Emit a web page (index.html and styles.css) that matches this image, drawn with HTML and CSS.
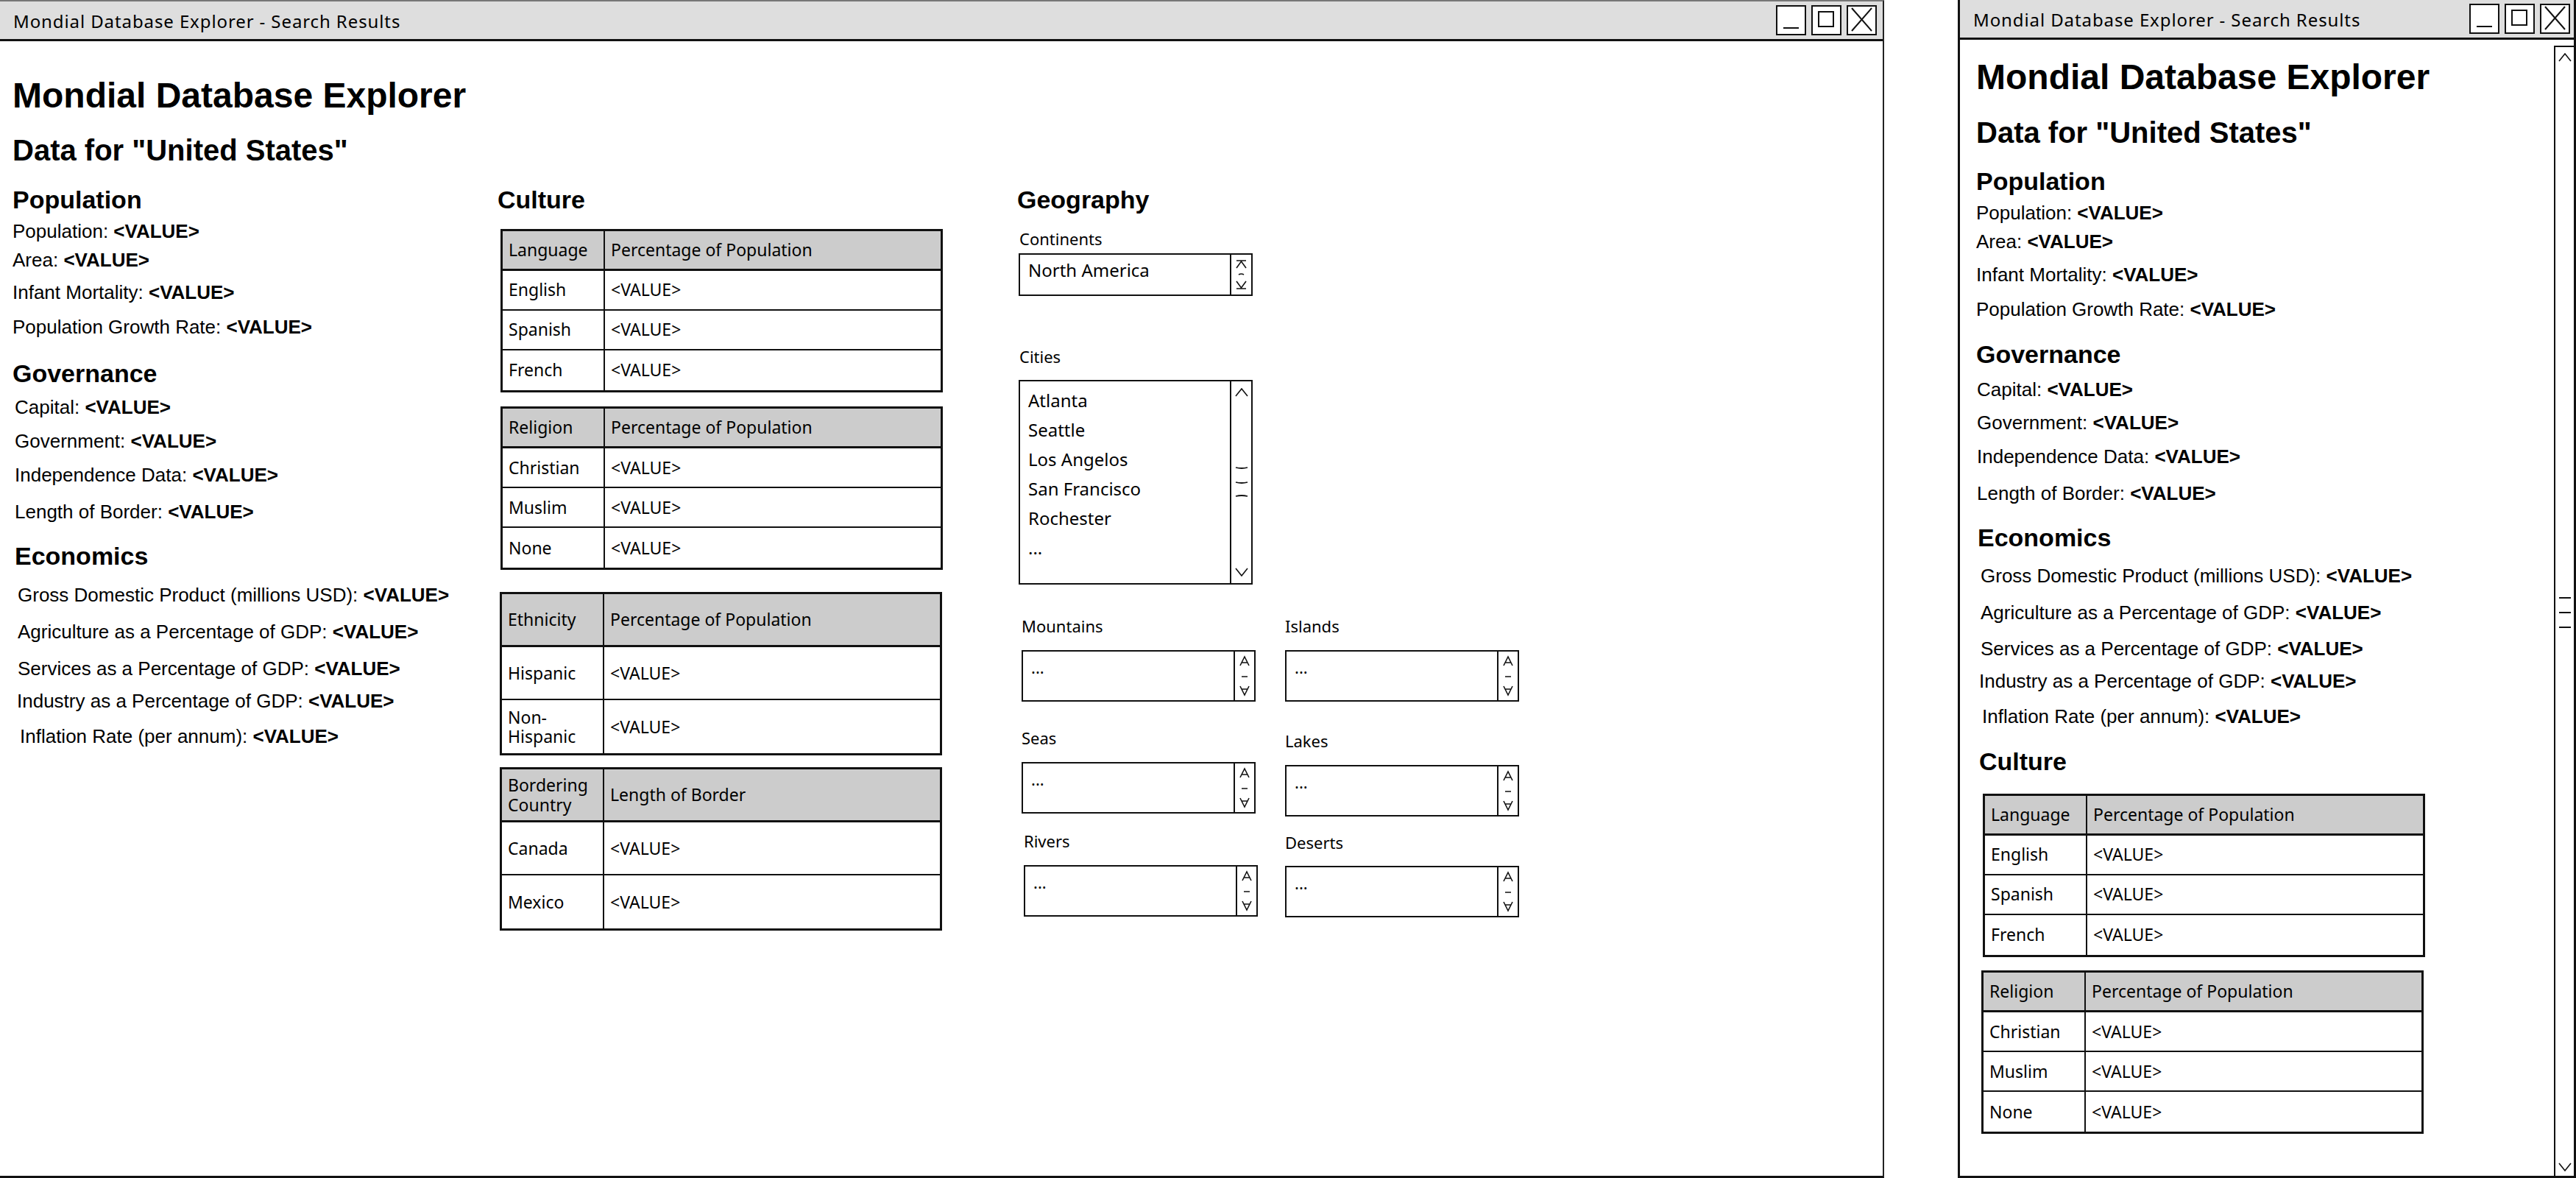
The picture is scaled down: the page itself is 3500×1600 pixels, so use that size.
FILE: index.html
```html
<!DOCTYPE html>
<html lang="en">
<head>
<meta charset="utf-8">
<title>Mondial Database Explorer - Search Results</title>
<link rel="stylesheet" href="styles.css">
</head>
<body>
<div class="desk">

  <section class="win win-main">
    <header class="titlebar">
      <span class="title">Mondial Database Explorer - Search Results</span>
      <div class="wbtns">
        <span class="wbtn"><svg viewBox="0 0 37 37"><line x1="8" y1="29" x2="29" y2="29"/></svg></span>
        <span class="wbtn"><svg viewBox="0 0 37 37"><rect x="8" y="7" width="20" height="20"/></svg></span>
        <span class="wbtn"><svg viewBox="0 0 37 37"><line x1="5" y1="2" x2="32" y2="33"/><line x1="32" y1="2" x2="5" y2="33"/></svg></span>
      </div>
    </header>

    <div class="page">
      <h1>Mondial Database Explorer</h1>
      <h2>Data for "United States"</h2>

      <div class="cols">
        <div class="col">
          <h3>Population</h3>
          <p class="fact g13">Population: <b>&lt;VALUE&gt;</b></p>
          <p class="fact g13">Area: <b>&lt;VALUE&gt;</b></p>
          <p class="fact g18">Infant Mortality: <b>&lt;VALUE&gt;</b></p>
          <p class="fact g21">Population Growth Rate: <b>&lt;VALUE&gt;</b></p>

          <h3 class="g33">Governance</h3>
          <p class="fact g16 in3">Capital: <b>&lt;VALUE&gt;</b></p>
          <p class="fact g20 in3">Government: <b>&lt;VALUE&gt;</b></p>
          <p class="fact g20 in3">Independence Data: <b>&lt;VALUE&gt;</b></p>
          <p class="fact g24 in3">Length of Border: <b>&lt;VALUE&gt;</b></p>

          <h3 class="g30 in3">Economics</h3>
          <p class="fact g23 in7">Gross Domestic Product (millions USD): <b>&lt;VALUE&gt;</b></p>
          <p class="fact g24 in7">Agriculture as a Percentage of GDP: <b>&lt;VALUE&gt;</b></p>
          <p class="fact g24 in7">Services as a Percentage of GDP: <b>&lt;VALUE&gt;</b></p>
          <p class="fact g18h in6">Industry as a Percentage of GDP: <b>&lt;VALUE&gt;</b></p>
          <p class="fact g22 in10">Inflation Rate (per annum): <b>&lt;VALUE&gt;</b></p>
        </div>

        <div class="col">
          <h3>Culture</h3>
          <div class="tbl g23 shift4">
            <span class="hd">Language</span><span class="hd">Percentage of Population</span>
            <span>English</span><span>&lt;VALUE&gt;</span>
            <span>Spanish</span><span>&lt;VALUE&gt;</span>
            <span>French</span><span>&lt;VALUE&gt;</span>
          </div>
          <div class="tbl g19h shift4">
            <span class="hd">Religion</span><span class="hd">Percentage of Population</span>
            <span>Christian</span><span>&lt;VALUE&gt;</span>
            <span>Muslim</span><span>&lt;VALUE&gt;</span>
            <span>None</span><span>&lt;VALUE&gt;</span>
          </div>
          <div class="tbl tall g30 shift3">
            <span class="hd">Ethnicity</span><span class="hd">Percentage of Population</span>
            <span>Hispanic</span><span>&lt;VALUE&gt;</span>
            <span class="two">Non-<br>Hispanic</span><span>&lt;VALUE&gt;</span>
          </div>
          <div class="tbl tall g16 shift3">
            <span class="hd two">Bordering<br>Country</span><span class="hd">Length of Border</span>
            <span>Canada</span><span>&lt;VALUE&gt;</span>
            <span>Mexico</span><span>&lt;VALUE&gt;</span>
          </div>
        </div>

        <div class="col">
          <h3>Geography</h3>
          <div class="geo-label g25 shift3">Continents</div>
          <div class="lbox combo shift2">
            <div class="lbox-text">North America</div>
            <div class="lbox-bar">
              <svg class="bar-ico" viewBox="0 0 27 54"><path d="M7 8 H20 M7 18 L13.5 9 L20 18 M10 27 Q13.5 25 17 27 M7 36 L13.5 45 L20 36 M7 46 H20"/></svg>
            </div>
          </div>

          <div class="geo-label g71 shift3">Cities</div>
          <div class="lbox cities shift2">
            <ul class="lbox-list">
              <li>Atlanta</li>
              <li>Seattle</li>
              <li>Los Angelos</li>
              <li>San Francisco</li>
              <li>Rochester</li>
              <li>...</li>
            </ul>
            <div class="lbox-bar bar-split">
              <svg class="chev" viewBox="0 0 18 12"><polyline points="1,11 9,1 17,11"/></svg>
              <svg class="grip" viewBox="0 0 18 44"><path d="M1 2 Q9 4 17 2 M1 22 Q9 24 17 22 M1 41 Q9 39 17 41"/></svg>
              <svg class="chev" viewBox="0 0 18 12"><polyline points="1,1 9,11 17,1"/></svg>
            </div>
          </div>

          <div class="spins">
            <div class="spin-col">
              <div class="spin">
                <div class="geo-label">Mountains</div>
                <div class="lbox small">
                  <div class="lbox-text dots">...</div>
                  <div class="lbox-bar"><svg class="bar-ico" viewBox="0 0 26 66"><path d="M7 19 L13 7 L19 19 M9 15 H17 M9 34 H17 M7 47 L13 59 L19 47 M9 51 H17"/></svg></div>
                </div>
              </div>
              <div class="spin g38">
                <div class="geo-label">Seas</div>
                <div class="lbox small">
                  <div class="lbox-text dots">...</div>
                  <div class="lbox-bar"><svg class="bar-ico" viewBox="0 0 26 66"><path d="M7 19 L13 7 L19 19 M9 15 H17 M9 34 H17 M7 47 L13 59 L19 47 M9 51 H17"/></svg></div>
                </div>
              </div>
              <div class="spin g26 shift3">
                <div class="geo-label">Rivers</div>
                <div class="lbox small">
                  <div class="lbox-text dots">...</div>
                  <div class="lbox-bar"><svg class="bar-ico" viewBox="0 0 26 66"><path d="M7 19 L13 7 L19 19 M9 15 H17 M9 34 H17 M7 47 L13 59 L19 47 M9 51 H17"/></svg></div>
                </div>
              </div>
            </div>
            <div class="spin-col">
              <div class="spin">
                <div class="geo-label">Islands</div>
                <div class="lbox small">
                  <div class="lbox-text dots">...</div>
                  <div class="lbox-bar"><svg class="bar-ico" viewBox="0 0 26 66"><path d="M7 19 L13 7 L19 19 M9 15 H17 M9 34 H17 M7 47 L13 59 L19 47 M9 51 H17"/></svg></div>
                </div>
              </div>
              <div class="spin g42">
                <div class="geo-label">Lakes</div>
                <div class="lbox small">
                  <div class="lbox-text dots">...</div>
                  <div class="lbox-bar"><svg class="bar-ico" viewBox="0 0 26 66"><path d="M7 19 L13 7 L19 19 M9 15 H17 M9 34 H17 M7 47 L13 59 L19 47 M9 51 H17"/></svg></div>
                </div>
              </div>
              <div class="spin g24">
                <div class="geo-label">Deserts</div>
                <div class="lbox small">
                  <div class="lbox-text dots">...</div>
                  <div class="lbox-bar"><svg class="bar-ico" viewBox="0 0 26 66"><path d="M7 19 L13 7 L19 19 M9 15 H17 M9 34 H17 M7 47 L13 59 L19 47 M9 51 H17"/></svg></div>
                </div>
              </div>
            </div>
          </div>
        </div>
      </div>
    </div>
  </section>

  <section class="win win-side">
    <header class="titlebar">
      <span class="title">Mondial Database Explorer - Search Results</span>
      <div class="wbtns">
        <span class="wbtn"><svg viewBox="0 0 37 37"><line x1="8" y1="29" x2="29" y2="29"/></svg></span>
        <span class="wbtn"><svg viewBox="0 0 37 37"><rect x="8" y="7" width="20" height="20"/></svg></span>
        <span class="wbtn"><svg viewBox="0 0 37 37"><line x1="5" y1="2" x2="32" y2="33"/><line x1="32" y1="2" x2="5" y2="33"/></svg></span>
      </div>
    </header>

    <div class="side-body">
      <div class="page2">
        <h1>Mondial Database Explorer</h1>
        <h2>Data for "United States"</h2>

        <h3 class="g29">Population</h3>
        <p class="fact g13">Population: <b>&lt;VALUE&gt;</b></p>
        <p class="fact g13">Area: <b>&lt;VALUE&gt;</b></p>
        <p class="fact g19">Infant Mortality: <b>&lt;VALUE&gt;</b></p>
        <p class="fact g21">Population Growth Rate: <b>&lt;VALUE&gt;</b></p>

        <h3 class="g31">Governance</h3>
        <p class="fact g18 in1">Capital: <b>&lt;VALUE&gt;</b></p>
        <p class="fact g19 in1">Government: <b>&lt;VALUE&gt;</b></p>
        <p class="fact g20 in1">Independence Data: <b>&lt;VALUE&gt;</b></p>
        <p class="fact g24 in1">Length of Border: <b>&lt;VALUE&gt;</b></p>

        <h3 class="g30 in2">Economics</h3>
        <p class="fact g22 in6">Gross Domestic Product (millions USD): <b>&lt;VALUE&gt;</b></p>
        <p class="fact g23h in6">Agriculture as a Percentage of GDP: <b>&lt;VALUE&gt;</b></p>
        <p class="fact g23 in6">Services as a Percentage of GDP: <b>&lt;VALUE&gt;</b></p>
        <p class="fact g18 in4">Industry as a Percentage of GDP: <b>&lt;VALUE&gt;</b></p>
        <p class="fact g22 in8">Inflation Rate (per annum): <b>&lt;VALUE&gt;</b></p>

        <h3 class="g31 in4">Culture</h3>
        <div class="tbl g27 shift9">
          <span class="hd">Language</span><span class="hd">Percentage of Population</span>
          <span>English</span><span>&lt;VALUE&gt;</span>
          <span>Spanish</span><span>&lt;VALUE&gt;</span>
          <span>French</span><span>&lt;VALUE&gt;</span>
        </div>
        <div class="tbl g18h shift7">
          <span class="hd">Religion</span><span class="hd">Percentage of Population</span>
          <span>Christian</span><span>&lt;VALUE&gt;</span>
          <span>Muslim</span><span>&lt;VALUE&gt;</span>
          <span>None</span><span>&lt;VALUE&gt;</span>
        </div>
      </div>

      <div class="vscroll">
        <svg class="chev" viewBox="0 0 18 12"><polyline points="1,11 9,1 17,11"/></svg>
        <svg class="grip" viewBox="0 0 18 44"><path d="M1 2 H17 M1 22 H17 M1 42 H17"/></svg>
        <svg class="chev" viewBox="0 0 18 12"><polyline points="1,1 9,11 17,1"/></svg>
      </div>
    </div>
  </section>

</div>
</body>
</html>
```

FILE: styles.css
```css
* {
  box-sizing: border-box;
}

html,
body {
  margin: 0;
  padding: 0;
}

body {
  width: 3500px;
  height: 1600px;
  overflow: hidden;
  background: #ffffff;
  color: #000000;
  font-family: "Liberation Sans", Arial, sans-serif;
}

.desk {
  display: flex;
  align-items: flex-start;
  height: 1600px;
}

/* ---------- windows ---------- */
.win {
  height: 1600px;
  background: #ffffff;
  border-bottom: 3px solid #111111;
  display: flex;
  flex-direction: column;
  overflow: hidden;
  flex: none;
}

.win-main {
  width: 2560px;
  border-top: 2px solid #777777;
  border-right: 2px solid #222222;
}

.win-side {
  width: 840px;
  margin-left: 100px;
  border-left: 3px solid #111111;
  border-right: 3px solid #111111;
}

.titlebar {
  flex: none;
  height: 54px;
  display: flex;
  justify-content: space-between;
  align-items: flex-start;
  background: #dedede;
  border-bottom: 3px solid #111111;
}

.win-main .titlebar {
  padding: 0 8px 0 18px;
}

.win-side .titlebar {
  padding: 0 5px 0 18px;
}

.title {
  margin-top: 15px;
  font-family: "Noto Sans", sans-serif;
  font-size: 24px;
  line-height: 1;
  letter-spacing: 0.9px;
  white-space: nowrap;
}

.wbtns {
  display: flex;
  gap: 7px;
  margin-top: 5px;
}

.wbtn {
  width: 41px;
  height: 41px;
  border: 2px solid #111111;
  background: #ffffff;
  display: flex;
}

.wbtn svg {
  width: 100%;
  height: 100%;
  fill: none;
  stroke: #111111;
  stroke-width: 2;
}

/* ---------- page content ---------- */
.page {
  flex: 1;
  padding: 50px 0 0 17px;
}

h1 {
  margin: 0;
  font-size: 48px;
  line-height: 1;
  font-weight: bold;
  white-space: nowrap;
}

h2 {
  margin: 30px 0 0;
  font-size: 40px;
  line-height: 1;
  font-weight: bold;
  white-space: nowrap;
}

.page2 h2 {
  margin-top: 31.7px;
}

h3 {
  margin: 0;
  font-size: 34px;
  line-height: 1;
  font-weight: bold;
}

.fact {
  margin: 0;
  font-size: 26px;
  line-height: 1;
  white-space: nowrap;
}

.fact b {
  font-weight: bold;
}

.cols {
  display: grid;
  grid-template-columns: 659px 706px 760px;
  margin-top: 29.5px;
}

.col {
  display: flex;
  flex-direction: column;
  align-items: flex-start;
}

/* vertical spacing helpers */
.g13 { margin-top: 13px; }
.g16 { margin-top: 16px; }
.g18 { margin-top: 18px; }
.g18h { margin-top: 18.5px; }
.g19 { margin-top: 19px; }
.g19h { margin-top: 19.5px; }
.g20 { margin-top: 20px; }
.g21 { margin-top: 21px; }
.g22 { margin-top: 22px; }
.g23 { margin-top: 23px; }
.g23h { margin-top: 23.5px; }
.g24 { margin-top: 24px; }
.g25 { margin-top: 25px; }
.g26 { margin-top: 26.5px; }
.g27 { margin-top: 27px; }
.g29 { margin-top: 29px; }
.g30 { margin-top: 30px; }
.g31 { margin-top: 31px; }
.g33 { margin-top: 33px; }
.g38 { margin-top: 38.5px; }
.g42 { margin-top: 42.5px; }
.g71 { margin-top: 71px; }

/* horizontal nudges */
.in1 { margin-left: 1px; }
.in2 { margin-left: 2px; }
.in3 { margin-left: 3px; }
.in4 { margin-left: 4px; }
.in6 { margin-left: 6px; }
.in7 { margin-left: 7px; }
.in8 { margin-left: 8px; }
.in10 { margin-left: 10px; }

.shift2 { margin-left: 2px; }
.shift3 { margin-left: 3px; }
.shift4 { margin-left: 4px; }
.shift7 { margin-left: 7px; }
.shift9 { margin-left: 9px; }

/* ---------- sketch tables ---------- */
.tbl {
  display: grid;
  grid-template-columns: 139px 1fr;
  width: 601px;
  border: 3px solid #111111;
  font-family: "Noto Sans", sans-serif;
  font-size: 23px;
  line-height: 1;
}

.tbl > span {
  display: flex;
  align-items: center;
  height: 54px;
  padding: 0 8px;
  border-bottom: 2px solid #111111;
  white-space: nowrap;
}

.tbl > span:nth-child(odd) {
  border-right: 2px solid #111111;
}

.tbl > span:nth-last-child(-n+2) {
  border-bottom: 0;
}

.tbl > .hd {
  background: #cccccc;
  border-bottom: 3px solid #111111;
}

.tbl.tall > span {
  height: 72px;
}

.tbl > .two {
  line-height: 1.15;
}

/* ---------- geography widgets ---------- */
.geo-label {
  font-family: "Noto Sans", sans-serif;
  font-size: 22px;
  line-height: 1;
}

.lbox {
  display: flex;
  width: 318px;
  border: 2px solid #111111;
  background: #ffffff;
  font-family: "Noto Sans", sans-serif;
}

.lbox-text {
  flex: 1;
  font-size: 24px;
  line-height: 1;
}

.lbox-bar {
  width: 29px;
  flex: none;
  border-left: 2px solid #111111;
  display: flex;
  flex-direction: column;
  align-items: center;
}

.bar-ico {
  width: 100%;
  height: 100%;
  fill: none;
  stroke: #111111;
  stroke-width: 1.6;
}

.combo {
  height: 58px;
  margin-top: 9.5px;
}

.combo .lbox-text {
  padding: 9px 11px 0;
}

.cities {
  height: 278px;
  margin-top: 20.5px;
}

.lbox-list {
  flex: 1;
  margin: 0;
  padding: 6px 11px 0;
  list-style: none;
  font-size: 24px;
  line-height: 40px;
}

.bar-split {
  justify-content: space-between;
  padding: 9px 0 9px;
}

.chev {
  width: 18px;
  height: 12px;
  fill: none;
  stroke: #111111;
  stroke-width: 1.6;
}

.grip {
  width: 18px;
  height: 44px;
  fill: none;
  stroke: #111111;
  stroke-width: 1.8;
}

.spins {
  display: flex;
  gap: 40px;
  margin-top: 45.5px;
  margin-left: 6px;
}

.spin-col {
  display: flex;
  flex-direction: column;
  width: 318px;
}

.spin {
  display: flex;
  flex-direction: column;
}

.small {
  height: 70px;
  margin-top: 21.5px;
}

.small .lbox-bar {
  width: 28px;
}

.dots {
  padding: 10px 11px 0;
  font-size: 22px;
}

/* ---------- side window ---------- */
.side-body {
  flex: 1;
  display: flex;
  min-height: 0;
}

.page2 {
  flex: 1;
  padding: 26.5px 0 0 22px;
  overflow: hidden;
}

.vscroll {
  width: 27px;
  flex: none;
  margin-top: 8px;
  border-left: 2px solid #111111;
  border-top: 2px solid #111111;
  display: flex;
  flex-direction: column;
  justify-content: space-between;
  align-items: center;
  padding: 8px 0 6px;
}
```
